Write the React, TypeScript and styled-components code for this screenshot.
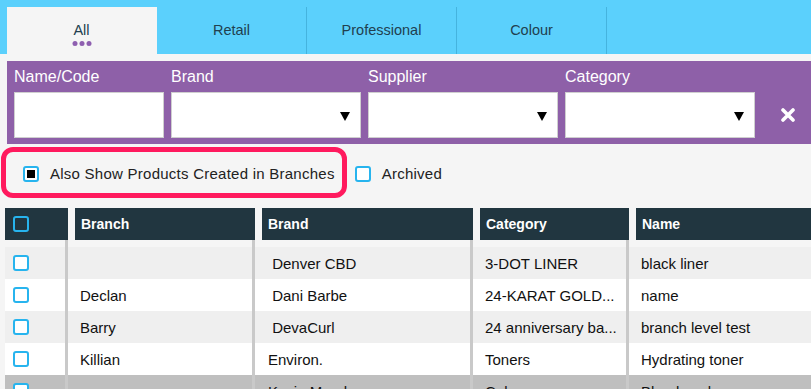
import React from "react";
import styled, { createGlobalStyle } from "styled-components";

const GlobalStyle = createGlobalStyle`
  html, body {
    margin: 0;
    padding: 0;
    overflow: hidden;
    background: #f5f5f5;
    font-family: "Liberation Sans", Arial, sans-serif;
  }
`;

const Page = styled.div`
  width: 811px;
  height: 389px;
  overflow: hidden;
  background: #f5f5f5;
`;

const TabBar = styled.div`
  display: flex;
  height: 54px;
  padding: 7px 0 0 7px;
  box-sizing: border-box;
  background: #5bd0fc;
`;

const Tab = styled.div<{ $active?: boolean }>`
  position: relative;
  width: 150px;
  box-sizing: border-box;
  display: flex;
  align-items: center;
  justify-content: center;
  padding-bottom: 1px;
  font-size: 14.5px;
  color: #21404f;
  background: ${(p) => (p.$active ? "#f5f5f5" : "transparent")};
  border-right: 1px solid ${(p) => (p.$active ? "transparent" : "#45b3de")};
`;

const Dots = styled.div`
  position: absolute;
  left: 50%;
  top: 34px;
  transform: translateX(-50%);
  display: flex;
  gap: 2px;

  span {
    width: 5px;
    height: 5px;
    border-radius: 50%;
    background: #8e5fb0;
  }
`;

const FilterPanel = styled.div`
  margin: 7px 0 0 7px;
  padding: 6px 0 6px 7px;
  background: #8e60a8;
  display: flex;
  align-items: flex-end;
  gap: 7px;
`;

const Field = styled.div<{ $w: number }>`
  width: ${(p) => p.$w}px;
  flex-shrink: 0;
  display: flex;
  flex-direction: column;
`;

const Label = styled.div`
  color: #fff;
  font-size: 16px;
  line-height: 20px;
  margin-bottom: 5px;
`;

const Input = styled.div<{ $select?: boolean }>`
  position: relative;
  height: 46px;
  background: #fff;
  border: 1px solid #cfcfcf;
  box-sizing: border-box;

  &::after {
    content: "";
    display: ${(p) => (p.$select ? "block" : "none")};
    position: absolute;
    right: 10px;
    top: 19px;
    border-left: 5px solid transparent;
    border-right: 5px solid transparent;
    border-top: 9px solid #000;
  }
`;

const ClearButton = styled.div`
  width: 40px;
  height: 46px;
  flex-shrink: 0;
  margin-left: 6px;
  display: flex;
  align-items: center;
  justify-content: center;
`;

const OptionsRow = styled.div`
  display: flex;
  align-items: center;
  height: 64px;
  padding: 3px 0 10px 1px;
  box-sizing: border-box;
`;

const Highlight = styled.div`
  display: flex;
  align-items: center;
  height: 51px;
  padding: 2px 7px 0 17px;
  box-sizing: border-box;
  border: 5px solid #ff1a5e;
  border-radius: 12px;
`;

const Option = styled.label`
  display: flex;
  align-items: center;
  gap: 11px;
  font-size: 15px;
  letter-spacing: 0.25px;
  color: #222;
`;

const Plain = styled.div`
  display: flex;
  align-items: center;
  padding-top: 2px;
  margin-left: 8px;
`;

const Check = styled.span<{ $checked?: boolean; $dark?: boolean }>`
  width: 16px;
  height: 16px;
  box-sizing: border-box;
  border: 2px solid #27b4ee;
  border-radius: 3px;
  background: ${(p) => (p.$dark ? "transparent" : "#fff")};
  display: flex;
  align-items: center;
  justify-content: center;
  flex-shrink: 0;

  &::after {
    content: "";
    display: ${(p) => (p.$checked ? "block" : "none")};
    width: 8px;
    height: 8px;
    background: #000;
  }
`;

const cols = "63px 187px 218px 156px 1fr";

const Grid = styled.div`
  display: grid;
  grid-template-columns: ${cols};
  margin-left: 5px;
`;

const HeadCell = styled.div<{ $first?: boolean }>`
  height: 32px;
  margin-left: ${(p) => (p.$first ? 0 : 7)}px;
  padding-left: ${(p) => (p.$first ? 8 : 6)}px;
  background: #213640;
  color: #fff;
  font-size: 14px;
  font-weight: bold;
  display: flex;
  align-items: center;
`;

const Cell = styled.div<{ $bg: string; $last?: boolean; $pad?: number; $h?: number }>`
  height: ${(p) => p.$h ?? 32}px;
  box-sizing: border-box;
  background: ${(p) => p.$bg};
  border-right: ${(p) => (p.$last ? "none" : "3px solid #c9c9c9")};
  padding-left: ${(p) => p.$pad ?? 12}px;
  font-size: 15px;
  color: #111;
  display: flex;
  align-items: center;
  white-space: pre;
  overflow: hidden;
`;

type Row = { branch: string; brand: string; category: string; name: string; bg: string };

const rows: Row[] = [
  { branch: "", brand: " Denver CBD", category: "3-DOT LINER", name: "black liner", bg: "#efefef" },
  { branch: "Declan", brand: " Dani Barbe", category: "24-KARAT GOLD...", name: "name", bg: "#ffffff" },
  { branch: "Barry", brand: " DevaCurl", category: "24 anniversary ba...", name: "branch level test", bg: "#efefef" },
  { branch: "Killian", brand: "Environ.", category: "Toners", name: "Hydrating toner", bg: "#ffffff" },
  { branch: "", brand: "Kevin Murphy", category: "Colour", name: "Blonde colour", bg: "#bfbfbf" },
];

const XIcon = () => (
  <svg width="14" height="14" viewBox="0 0 14 14">
    <path d="M2 2 L12 12 M12 2 L2 12" stroke="#fff" strokeWidth="3.6" strokeLinecap="round" />
  </svg>
);

export default function App() {
  return (
    <Page>
      <GlobalStyle />
      <TabBar>
        <Tab $active>
          All
          <Dots>
            <span />
            <span />
            <span />
          </Dots>
        </Tab>
        <Tab>Retail</Tab>
        <Tab>Professional</Tab>
        <Tab>Colour</Tab>
      </TabBar>

      <FilterPanel>
        <Field $w={150}>
          <Label>Name/Code</Label>
          <Input />
        </Field>
        <Field $w={190}>
          <Label>Brand</Label>
          <Input $select />
        </Field>
        <Field $w={190}>
          <Label>Supplier</Label>
          <Input $select />
        </Field>
        <Field $w={190}>
          <Label>Category</Label>
          <Input $select />
        </Field>
        <ClearButton>
          <XIcon />
        </ClearButton>
      </FilterPanel>

      <OptionsRow>
        <Highlight>
          <Option>
            <Check $checked />
            Also Show Products Created in Branches
          </Option>
        </Highlight>
        <Plain>
          <Option>
            <Check />
            Archived
          </Option>
        </Plain>
      </OptionsRow>

      <Grid>
        <HeadCell $first>
          <Check $dark />
        </HeadCell>
        <HeadCell>Branch</HeadCell>
        <HeadCell>Brand</HeadCell>
        <HeadCell>Category</HeadCell>
        <HeadCell>Name</HeadCell>

        <Cell $bg="#f5f5f5" $h={7} />
        <Cell $bg="#f5f5f5" $h={7} />
        <Cell $bg="#f5f5f5" $h={7} />
        <Cell $bg="#f5f5f5" $h={7} />
        <Cell $bg="#f5f5f5" $h={7} $last />

        {rows.map((r, i) => (
          <React.Fragment key={i}>
            <Cell $bg={r.bg} $pad={8}>
              <Check />
            </Cell>
            <Cell $bg={r.bg}>{r.branch}</Cell>
            <Cell $bg={r.bg} $pad={13}>{r.brand}</Cell>
            <Cell $bg={r.bg}>{r.category}</Cell>
            <Cell $bg={r.bg} $last>{r.name}</Cell>
          </React.Fragment>
        ))}
      </Grid>
    </Page>
  );
}
